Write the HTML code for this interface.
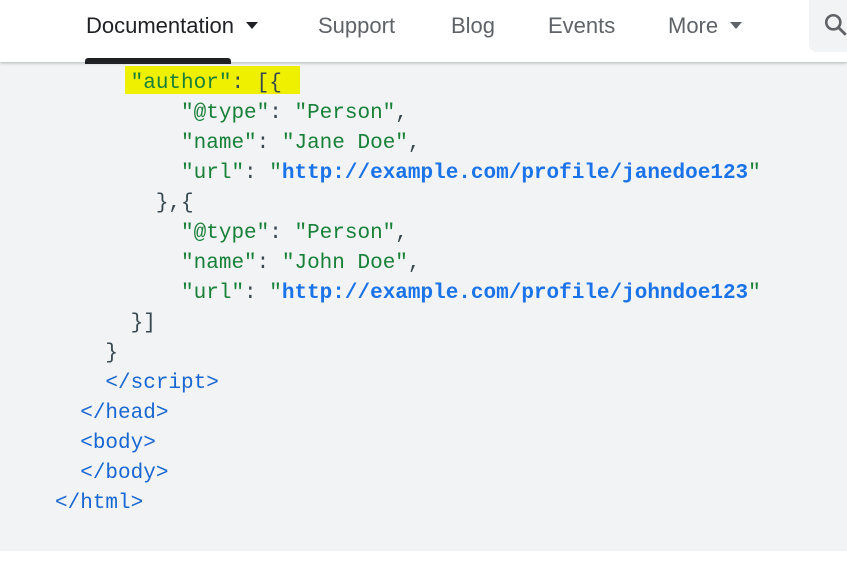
<!DOCTYPE html>
<html><head><meta charset="utf-8"><style>
html,body{margin:0;padding:0;width:847px;height:562px;background:#fff;overflow:hidden}
.nav{position:absolute;left:0;top:0;width:847px;height:62px;background:#fff;box-shadow:0 1px 3px rgba(60,64,67,.35);z-index:2;font-family:"Liberation Sans",sans-serif;font-size:22px}
.nav span{position:absolute;top:13px;color:#5f6368}
.tri{display:inline-block;width:0;height:0;border-left:6px solid transparent;border-right:6px solid transparent;border-top:7px solid currentColor;vertical-align:middle;margin-left:12px;margin-top:-3px}
.bar{position:absolute;left:85px;top:58px;width:146px;height:6px;background:#202124;border-radius:3px 3px 0 0;z-index:3}
.search{position:absolute;left:809px;top:0;width:60px;height:52px;background:#f1f3f4;border-radius:0 0 0 8px}
.code{position:absolute;left:0;top:62px;width:847px;height:489px;background:#f1f3f4;font-family:"Liberation Mono",monospace;font-size:21px;color:#37474f}
.l{position:absolute;left:55px;white-space:pre;line-height:30px;margin-top:3px}
.g{color:#188038}.b{color:#1a73e8;font-weight:bold}.t{color:#1967d2}
.hl{position:absolute;left:125px;top:4px;width:175px;height:28px;background:#eff000}
</style></head><body>
<div class="nav">
<span style="left:86px;color:#202124">Documentation<i class="tri"></i></span>
<span style="left:318px">Support</span>
<span style="left:451px">Blog</span>
<span style="left:548px">Events</span>
<span style="left:668px">More<i class="tri"></i></span>
<div class="search"><svg style="position:absolute;left:14px;top:12px" width="26" height="26" viewBox="0 0 24 24"><circle cx="9.5" cy="9.5" r="6.5" fill="none" stroke="#5f6368" stroke-width="2.4"/><path d="M14.5 14.5L21 21" stroke="#5f6368" stroke-width="2.6"/></svg></div>
</div>
<div class="bar"></div>
<div class="code">
<div class="hl"></div>
<div class="l" style="top:4px">      <span class="g">"author"</span>: [{</div>
<div class="l" style="top:34px">          <span class="g">"@type"</span>: <span class="g">"Person"</span>,</div>
<div class="l" style="top:64px">          <span class="g">"name"</span>: <span class="g">"Jane Doe"</span>,</div>
<div class="l" style="top:94px">          <span class="g">"url"</span>: <span class="g">"</span><span class="b">http://example.com/profile/janedoe123</span><span class="g">"</span></div>
<div class="l" style="top:124px">        },{</div>
<div class="l" style="top:154px">          <span class="g">"@type"</span>: <span class="g">"Person"</span>,</div>
<div class="l" style="top:184px">          <span class="g">"name"</span>: <span class="g">"John Doe"</span>,</div>
<div class="l" style="top:214px">          <span class="g">"url"</span>: <span class="g">"</span><span class="b">http://example.com/profile/johndoe123</span><span class="g">"</span></div>
<div class="l" style="top:244px">      }]</div>
<div class="l" style="top:274px">    }</div>
<div class="l" style="top:304px">    <span class="t">&lt;/script&gt;</span></div>
<div class="l" style="top:334px">  <span class="t">&lt;/head&gt;</span></div>
<div class="l" style="top:364px">  <span class="t">&lt;body&gt;</span></div>
<div class="l" style="top:394px">  <span class="t">&lt;/body&gt;</span></div>
<div class="l" style="top:424px"><span class="t">&lt;/html&gt;</span></div>
</div>
</body></html>
